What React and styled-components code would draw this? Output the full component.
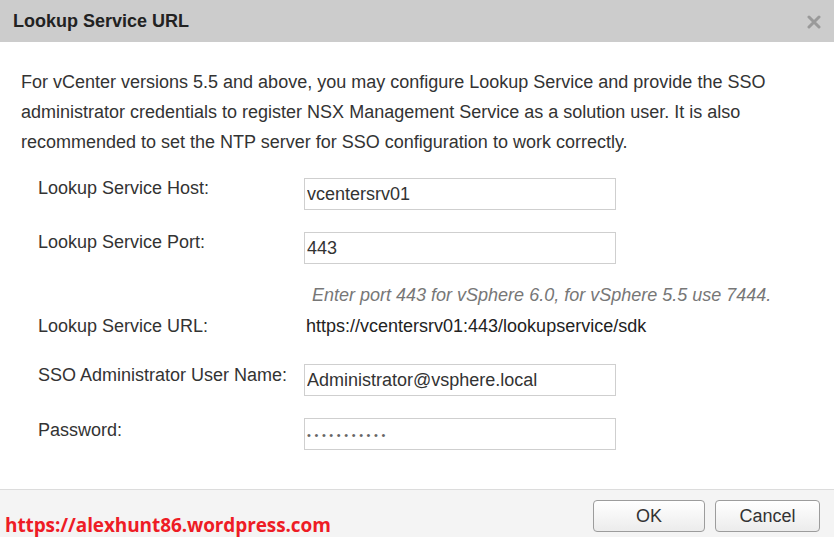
import React from 'react'
import styled, { createGlobalStyle } from 'styled-components'

const Global = createGlobalStyle`
  html, body { margin: 0; padding: 0; background: #fff; }
  body { font-family: "Liberation Sans", Arial, sans-serif; }
  * { box-sizing: border-box; }
`

const Dialog = styled.div`
  width: 834px;
  height: 537px;
  display: flex;
  flex-direction: column;
  background: #fff;
  overflow: hidden;
`

const Header = styled.div`
  height: 42px;
  flex: none;
  background: #cccccc;
  display: flex;
  align-items: center;
  justify-content: space-between;
  padding: 0 13px;
`

const Title = styled.h1`
  margin: 0;
  font-size: 18px;
  font-weight: bold;
  color: #222;
`

const Close = styled.button`
  border: 0;
  background: none;
  padding: 0;
  width: 14px;
  height: 14px;
  display: flex;
  margin-top: 2px;
  cursor: pointer;
`

const Body = styled.div`
  flex: 1;
  padding: 25px 21px 0;
`

const Intro = styled.p`
  margin: 0;
  width: 752px;
  font-size: 18px;
  line-height: 30px;
  color: #333;
`

const Form = styled.div`
  display: grid;
  grid-template-columns: 266px 312px;
  margin: 21px 0 0 17px;
`

const Label = styled.div`
  font-size: 18px;
  line-height: 20px;
  white-space: nowrap;
  color: #333;
  margin-top: ${p => p.$top || 0}px;
  padding-top: ${p => p.$pad || 0}px;
`

const Input = styled.input`
  width: 312px;
  height: 32px;
  border: 1px solid #cfcfcf;
  padding: 1px 2px 0;
  font-family: "Liberation Sans", Arial, sans-serif;
  font-size: 18px;
  color: #333;
  margin-top: ${p => p.$top || 0}px;
  outline: none;
  &[type='password'] {
    font-size: 11px;
    letter-spacing: 3.6px;
    color: #666;
  }
`

const Hint = styled.div`
  grid-column: 2 / span 1;
  white-space: nowrap;
  margin-top: 21px;
  padding-left: 8px;
  font-size: 18px;
  line-height: 20px;
  font-style: italic;
  color: #777;
`

const Value = styled.div`
  margin-top: 11px;
  padding-left: 2px;
  white-space: nowrap;
  font-size: 18px;
  line-height: 20px;
  color: #222;
`

const Footer = styled.div`
  height: 48px;
  flex: none;
  border-top: 1px solid #dcdcdc;
  background: #f4f4f4;
  display: flex;
  justify-content: space-between;
  padding: 10px 14px 0 5px;
`

const Watermark = styled.a`
  align-self: flex-end;
  font-family: "Open Sans", sans-serif;
  font-weight: bold;
  font-size: 19px;
  line-height: 24px;
  color: #ee1c25;
  text-decoration: none;
  letter-spacing: -0.1px;
`

const Buttons = styled.div`
  display: flex;
  gap: 10px;
  align-items: flex-start;
`

const Button = styled.button`
  width: ${p => p.$w}px;
  height: 32px;
  border: 1px solid #9c9c9c;
  border-radius: 4px;
  background: linear-gradient(#ffffff, #ececec);
  font-family: "Liberation Sans", Arial, sans-serif;
  font-size: 18px;
  color: #333;
  padding: 0;
  cursor: pointer;
`

export default function App() {
  return (
    <Dialog>
      <Global />
      <Header>
        <Title>Lookup Service URL</Title>
        <Close aria-label="Close">
          <svg width="14" height="14" viewBox="0 0 14 14">
            <path d="M2 2 L12 12 M12 2 L2 12" stroke="#9a9a9a" strokeWidth="3" strokeLinecap="round" />
          </svg>
        </Close>
      </Header>
      <Body>
        <Intro>
          For vCenter versions 5.5 and above, you may configure Lookup Service and provide the SSO
          administrator credentials to register NSX Management Service as a solution user. It is also
          recommended to set the NTP server for SSO configuration to work correctly.
        </Intro>
        <Form>
          <Label>Lookup Service Host:</Label>
          <Input defaultValue="vcentersrv01" />

          <Label $top={22}>Lookup Service Port:</Label>
          <Input $top={22} defaultValue="443" />

          <Hint>Enter port 443 for vSphere 6.0, for vSphere 5.5 use 7444.</Hint>

          <Label $top={11}>Lookup Service URL:</Label>
          <Value>https://vcentersrv01:443/lookupservice/sdk</Value>

          <Label $top={28} $pad={1}>SSO Administrator User Name:</Label>
          <Input $top={28} defaultValue="Administrator@vsphere.local" />

          <Label $top={22} $pad={2}>Password:</Label>
          <Input $top={22} type="password" defaultValue="12345678901" />
        </Form>
      </Body>
      <Footer>
        <Watermark href="#">https://alexhunt86.wordpress.com</Watermark>
        <Buttons>
          <Button $w={112}>OK</Button>
          <Button $w={105}>Cancel</Button>
        </Buttons>
      </Footer>
    </Dialog>
  )
}
